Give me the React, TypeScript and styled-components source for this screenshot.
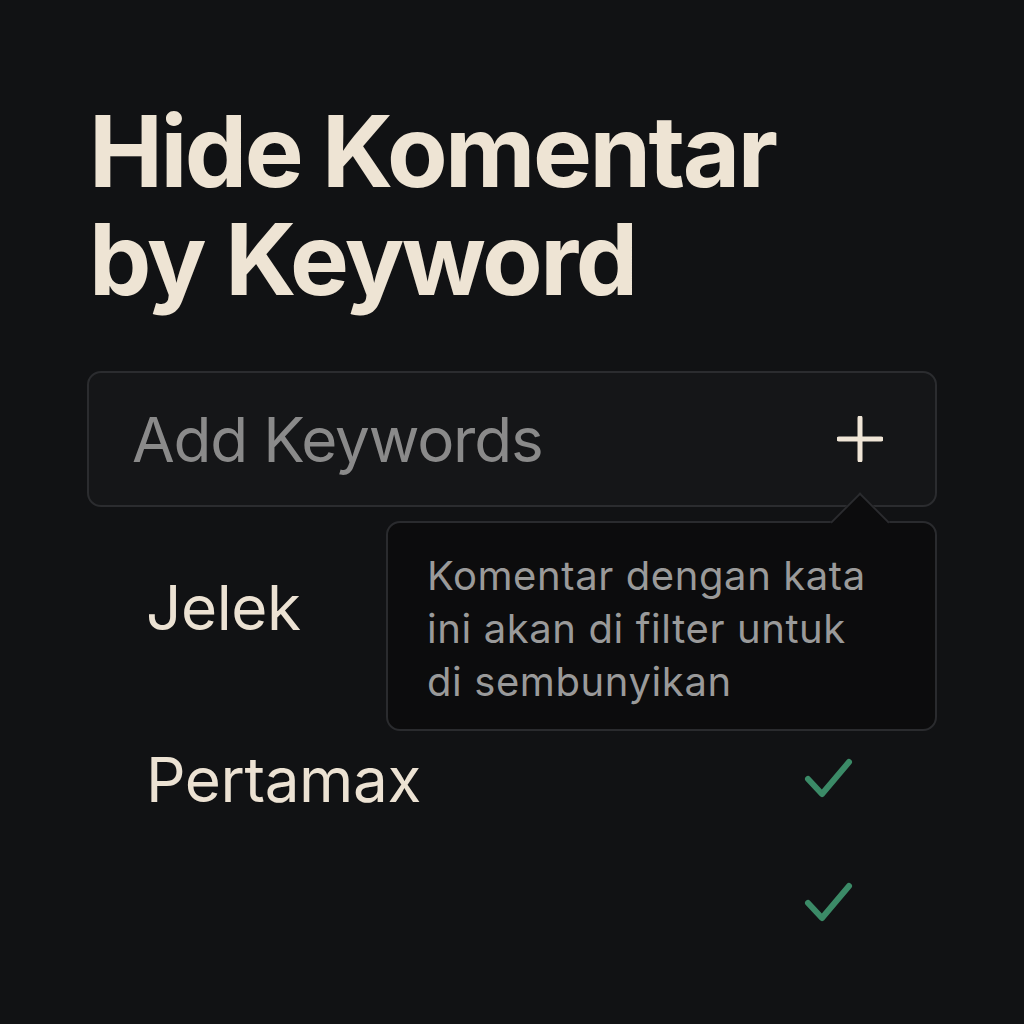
import React from "react";
import styled, { createGlobalStyle } from "styled-components";

const GlobalStyle = createGlobalStyle`
  html, body {
    margin: 0;
    padding: 0;
    background: #111214;
  }
  body {
    font-family: Inter, "Noto Sans", "Liberation Sans", sans-serif;
  }
`;

const Page = styled.div`
  width: 1024px;
  height: 1024px;
  box-sizing: border-box;
  padding: 97px 87px 0 87px;
  background: #111214;
  overflow: hidden;
`;

const Title = styled.h1`
  margin: 0 0 0 2px;
  font-size: 99px;
  font-weight: 700;
  line-height: 108px;
  letter-spacing: -2.5px;
  color: #eee4d4;
`;

const InputWrap = styled.div`
  position: relative;
  margin-top: 58px;
`;

const InputBox = styled.div`
  display: flex;
  align-items: center;
  justify-content: space-between;
  height: 136px;
  box-sizing: border-box;
  padding: 0 52px 0 43px;
  border: 2px solid #2b2c2f;
  border-radius: 14px;
  background: #151618;
`;

const Placeholder = styled.span`
  font-size: 62px;
  color: #8a8a8a;
  letter-spacing: -1.2px;
`;

const AddButton = styled.button`
  display: flex;
  padding: 0;
  border: none;
  background: none;
  cursor: pointer;
`;

const Tooltip = styled.div`
  position: absolute;
  top: 150px;
  left: 299px;
  width: 551px;
  height: 210px;
  box-sizing: border-box;
  padding: 26px 40px 0 39px;
  border: 2px solid #2a2b2e;
  border-radius: 14px;
  background: #0c0c0d;
  z-index: 2;

  &::before {
    content: "";
    position: absolute;
    top: -22px;
    right: 54px;
    width: 40px;
    height: 40px;
    background: #0c0c0d;
    border-top: 2px solid #2a2b2e;
    border-left: 2px solid #2a2b2e;
    transform: rotate(45deg);
  }
`;

const TooltipText = styled.p`
  margin: 0;
  font-size: 40px;
  line-height: 53px;
  letter-spacing: 0.6px;
  color: #9a9a9a;
`;

const List = styled.ul`
  list-style: none;
  margin: 0;
  padding: 0 83px 0 59px;
`;

const Row = styled.li<{ $top: number }>`
  display: flex;
  align-items: center;
  justify-content: space-between;
  height: 100px;
  margin-top: ${(p) => p.$top}px;
`;

const Keyword = styled.span`
  font-size: 62px;
  color: #ece2d3;
  letter-spacing: -0.4px;
`;

const CheckIcon = () => (
  <svg width="50" height="44" viewBox="0 0 50 44" fill="none">
    <path
      d="M4 22 L18 37 L45 5"
      stroke="#3b8a67"
      strokeWidth="6"
      strokeLinecap="round"
      strokeLinejoin="round"
    />
  </svg>
);

const PlusIcon = () => (
  <svg width="46" height="46" viewBox="0 0 46 46" fill="none">
    <path
      d="M23 2 V44 M2 23 H44"
      stroke="#efe5d6"
      strokeWidth="5"
      strokeLinecap="round"
    />
  </svg>
);

const keywords = [
  { label: "Jelek", top: 50 },
  { label: "Pertamax", top: 72 },
  { label: "", top: 24 },
];

export default function App() {
  return (
    <>
      <GlobalStyle />
      <Page>
        <Title>
          Hide Komentar
          <br />
          by Keyword
        </Title>
        <InputWrap>
          <InputBox>
            <Placeholder>Add Keywords</Placeholder>
            <AddButton aria-label="Add keyword">
              <PlusIcon />
            </AddButton>
          </InputBox>
          <Tooltip>
            <TooltipText>
              Komentar dengan kata
              <br />
              ini akan di filter untuk
              <br />
              di sembunyikan
            </TooltipText>
          </Tooltip>
        </InputWrap>
        <List>
          {keywords.map((k, i) => (
            <Row key={i} $top={k.top}>
              <Keyword>{k.label}</Keyword>
              <CheckIcon />
            </Row>
          ))}
        </List>
      </Page>
    </>
  );
}
